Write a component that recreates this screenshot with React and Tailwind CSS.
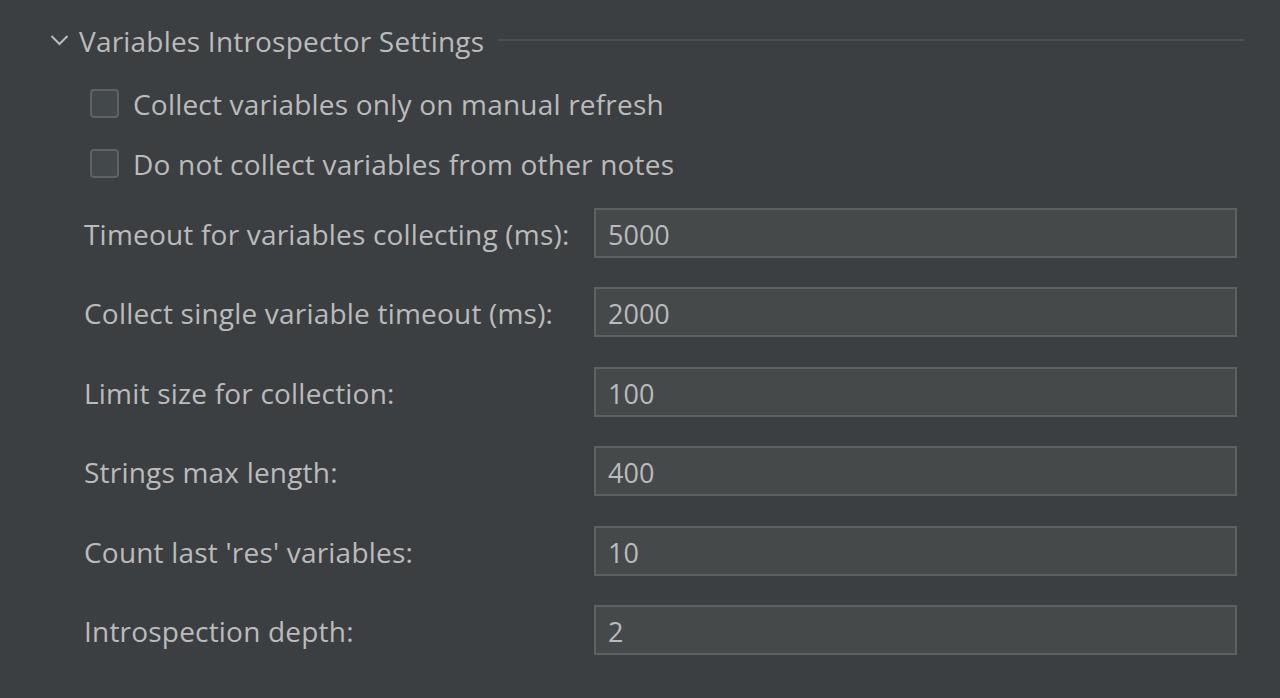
import React from 'react';

const fields = [
  { label: 'Timeout for variables collecting (ms):', value: '5000' },
  { label: 'Collect single variable timeout (ms):', value: '2000' },
  { label: 'Limit size for collection:', value: '100' },
  { label: 'Strings max length:', value: '400' },
  { label: "Count last 'res' variables:", value: '10' },
  { label: 'Introspection depth:', value: '2' },
];

const checks = [
  'Collect variables only on manual refresh',
  'Do not collect variables from other notes',
];

const App = () => {
  return (
    <div
      className="w-[1280px] h-[698px] bg-[#3c3f41] text-[#bbbbbb] overflow-hidden"
      style={{ fontFamily: '"Open Sans", "Noto Sans", sans-serif' }}
    >
      <div className="pt-[20px] pl-[50px] pr-[36px]">
        {/* section header */}
        <div className="flex items-center h-[40px]">
          <svg width="20" height="22" viewBox="0 0 20 22" className="mr-[9px]">
            <path d="M1.5 7 L9.5 15 L17.5 7" fill="none" stroke="#bbbbbb" strokeWidth="2" />
          </svg>
          <span className="text-[28px] leading-none whitespace-nowrap tracking-[0.2px] pt-[1px]">Variables Introspector Settings</span>
          <div className="flex-1 h-[2px] bg-[#4d5052] ml-[14px]" />
        </div>

        {/* checkboxes */}
        <div className="pl-[40px] mt-[13px] flex flex-col">
          {checks.map((c) => (
            <label key={c} className="flex items-center h-[60px]">
              <span className="w-[29px] h-[29px] rounded-[4px] border-2 border-[#5f6263] bg-[#43494a] mr-[14px]" />
              <span className="text-[28px] leading-none whitespace-nowrap tracking-[0.2px] pt-[1px]">{c}</span>
            </label>
          ))}
        </div>

        {/* fields */}
        <div className="pl-[34px] mt-[15px] flex flex-col gap-[29.4px]">
          {fields.map((f) => (
            <div key={f.label} className="flex items-center h-[50px]">
              <span className="w-[510px] text-[28px] leading-none whitespace-nowrap tracking-[0.2px] pt-[2px]">{f.label}</span>
              <div className="w-[643px] h-[50px] border-2 border-[#5e6161] bg-[#45494a] flex items-center pl-[12px]">
                <span className="text-[27px] leading-none pt-[3px]">{f.value}</span>
              </div>
            </div>
          ))}
        </div>
      </div>
    </div>
  );
};

export default App;
